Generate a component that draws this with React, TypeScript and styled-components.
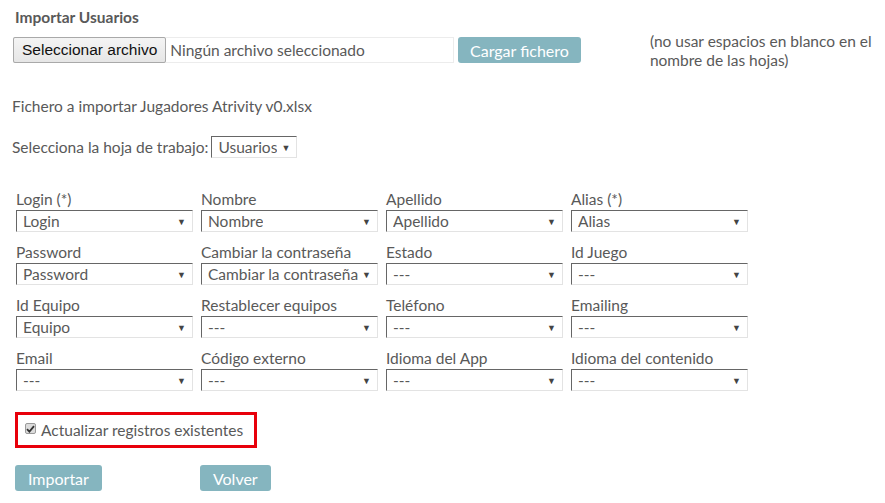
import React from 'react';
import styled, { createGlobalStyle } from 'styled-components';

const GlobalStyle = createGlobalStyle`
  html, body {
    margin: 0;
    padding: 0;
    background: #fff;
  }
  body {
    font-family: Lato, 'Open Sans', sans-serif;
    color: #595959;
  }
`;

interface IField {
  label: string;
  value: string;
}

const fields: IField[] = [
  { label: 'Login (*)', value: 'Login' },
  { label: 'Nombre', value: 'Nombre' },
  { label: 'Apellido', value: 'Apellido' },
  { label: 'Alias (*)', value: 'Alias' },
  { label: 'Password', value: 'Password' },
  { label: 'Cambiar la contraseña', value: 'Cambiar la contraseña' },
  { label: 'Estado', value: '---' },
  { label: 'Id Juego', value: '---' },
  { label: 'Id Equipo', value: 'Equipo' },
  { label: 'Restablecer equipos', value: '---' },
  { label: 'Teléfono', value: '---' },
  { label: 'Emailing', value: '---' },
  { label: 'Email', value: '---' },
  { label: 'Código externo', value: '---' },
  { label: 'Idioma del App', value: '---' },
  { label: 'Idioma del contenido', value: '---' },
];

const SelectBox = ({ value, width }: { value: string; width?: number }) => (
  <SelectWrapper $width={width}>
    <SelectValue>{value}</SelectValue>
    <Arrow>▼</Arrow>
  </SelectWrapper>
);

export default function App() {
  return (
    <Page>
      <GlobalStyle />
      <Title>Importar Usuarios</Title>

      <UploadRow>
        <FileField>
          <FileButton>Seleccionar archivo</FileButton>
          <FileName>Ningún archivo seleccionado</FileName>
        </FileField>
        <ActionButton $ml={4} $px={12}>
          Cargar fichero
        </ActionButton>
        <Note>(no usar espacios en blanco en el nombre de las hojas)</Note>
      </UploadRow>

      <FileInfo>Fichero a importar Jugadores Atrivity v0.xlsx</FileInfo>

      <SheetRow>
        <span>Selecciona la hoja de trabajo:</span>
        <SelectBox value="Usuarios" width={86} />
      </SheetRow>

      <FieldGrid>
        {fields.map((f) => (
          <Field key={f.label}>
            <FieldLabel>{f.label}</FieldLabel>
            <SelectBox value={f.value} />
          </Field>
        ))}
      </FieldGrid>

      <CheckRow>
        <CheckMark>
          <svg width="9" height="8" viewBox="0 0 9 8">
            <path d="M1 4.2 L3.4 6.6 L8 1.2" fill="none" stroke="#333" strokeWidth="1.8" />
          </svg>
        </CheckMark>
        <span>Actualizar registros existentes</span>
      </CheckRow>

      <Footer>
        <ActionButton>Importar</ActionButton>
        <ActionButton>Volver</ActionButton>
      </Footer>
    </Page>
  );
}

const Page = styled.div`
  width: 885px;
  height: 503px;
  box-sizing: border-box;
  padding: 8px 0 0 12px;
  display: flex;
  flex-direction: column;
  align-items: flex-start;
  font-size: 15.5px;
`;

const Title = styled.h3`
  margin: 0 0 0 3px;
  font-size: 15.5px;
  font-weight: 700;
  line-height: 18px;
  color: #595959;
`;

const UploadRow = styled.div`
  display: flex;
  align-items: flex-start;
  margin-top: 11px;
  margin-left: 1px;
`;

const FileField = styled.div`
  display: flex;
  align-items: center;
  width: 441px;
  height: 26px;
  box-sizing: border-box;
  border: 1px solid #ececec;
  border-left: none;
`;

const FileButton = styled.button`
  height: 26px;
  margin-top: -1px;
  margin-bottom: -1px;
  padding: 0 8px;
  font-family: 'Liberation Sans', Arial, sans-serif;
  font-size: 15.5px;
  color: #111;
  background: linear-gradient(#f4f4f4, #e6e6e6);
  border: 1px solid #a9a9a9;
  border-radius: 2px;
`;

const FileName = styled.span`
  margin-left: 4px;
  font-size: 15.5px;
  color: #595959;
`;

const ActionButton = styled.button<{ $ml?: number; $px?: number }>`
  height: 26px;
  margin-left: ${(p) => p.$ml ?? 0}px;
  padding: 0 ${(p) => p.$px ?? 13}px;
  font-family: Lato, sans-serif;
  font-size: 16px;
  color: #fff;
  background: #85b5bf;
  border: none;
  border-radius: 3px;
`;

const Note = styled.p`
  width: 230px;
  margin: -5px 0 0 69px;
  font-size: 15.5px;
  line-height: 19px;
`;

const FileInfo = styled.p`
  margin: 27px 0 0;
  line-height: 18px;
`;

const SheetRow = styled.div`
  display: flex;
  align-items: center;
  gap: 3px;
  margin-top: 21px;
`;

const SelectWrapper = styled.div<{ $width?: number }>`
  display: flex;
  align-items: center;
  justify-content: space-between;
  width: ${(p) => p.$width ?? 177}px;
  height: 22px;
  box-sizing: border-box;
  padding: 0 6px 0 6px;
  border-style: solid;
  border-width: 1px;
  border-color: #666 #e3e3e3 #e3e3e3 #666;
  background: #fff;
`;

const SelectValue = styled.span`
  font-size: 15.5px;
  line-height: 20px;
  white-space: nowrap;
  overflow: hidden;
`;

const Arrow = styled.span`
  font-size: 9px;
  color: #444;
  margin-left: 4px;
`;

const FieldGrid = styled.div`
  display: grid;
  grid-template-columns: repeat(4, 177px);
  column-gap: 8px;
  row-gap: 11px;
  margin: 32px 0 0 4px;
`;

const Field = styled.div`
  display: flex;
  flex-direction: column;
  gap: 2px;
`;

const FieldLabel = styled.span`
  font-size: 15.5px;
  line-height: 18px;
`;

const CheckRow = styled.div`
  display: flex;
  align-items: center;
  gap: 5px;
  width: 242px;
  height: 36px;
  box-sizing: border-box;
  margin: 21px 0 0 3px;
  padding: 0 0 0 7px;
  border: 3px solid #e8000b;
  font-size: 15.5px;
`;

const CheckMark = styled.span`
  display: flex;
  align-items: center;
  justify-content: center;
  width: 11px;
  height: 11px;
  box-sizing: border-box;
  margin-top: -3px;
  background: #dcdcdc;
  border: 1px solid #9a9a9a;
  border-radius: 2px;
`;

const Footer = styled.div`
  display: flex;
  gap: 98px;
  margin: 17px 0 0 3px;
`;
